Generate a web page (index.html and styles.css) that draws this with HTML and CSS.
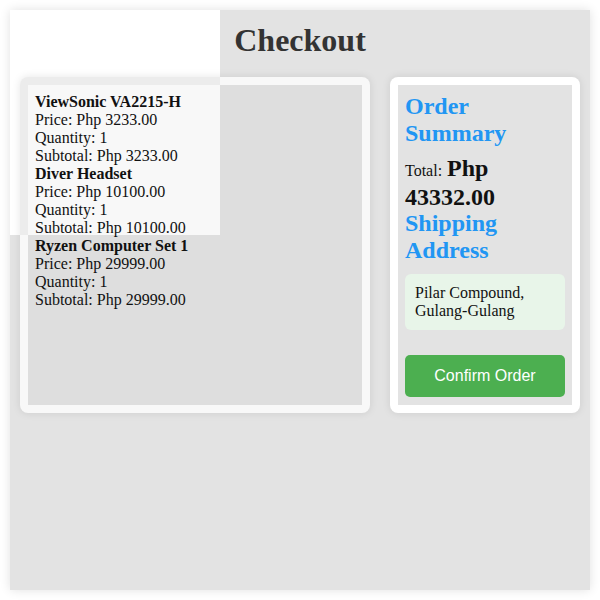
FILE: index.html
```html
<!DOCTYPE html>
<html>
<head>
<meta charset="utf-8">
<title>Checkout</title>
<link rel="stylesheet" href="styles.css">
</head>
<body>
<div class="container">
  <h1 class="title">Checkout</h1>
  <div class="layout">
    <div class="card card-items">
      <div class="items">
        <div class="item">
          <div class="item-name">ViewSonic VA2215-H</div>
          <div>Price: Php 3233.00</div>
          <div>Quantity: 1</div>
          <div>Subtotal: Php 3233.00</div>
        </div>
        <div class="item">
          <div class="item-name">Diver Headset</div>
          <div>Price: Php 10100.00</div>
          <div>Quantity: 1</div>
          <div>Subtotal: Php 10100.00</div>
        </div>
        <div class="item">
          <div class="item-name">Ryzen Computer Set 1</div>
          <div>Price: Php 29999.00</div>
          <div>Quantity: 1</div>
          <div>Subtotal: Php 29999.00</div>
        </div>
      </div>
    </div>
    <div class="card card-summary">
      <div class="summary">
        <h2 class="heading">Order Summary</h2>
        <p class="total">Total: <strong class="total-value">Php 43332.00</strong></p>
        <h2 class="heading">Shipping Address</h2>
        <div class="address">Pilar Compound, Gulang-Gulang</div>
        <button class="confirm">Confirm Order</button>
      </div>
    </div>
  </div>
</div>
</body>
</html>
```

FILE: styles.css
```css
html, body {
  margin: 0;
  padding: 0;
  background: #ffffff;
}

body {
  font-family: "Liberation Serif", "Times New Roman", serif;
  font-size: 16px;
  color: #111;
}

.container {
  position: relative;
  z-index: 0;
  margin: 10px;
  height: 580px;
  box-sizing: border-box;
  padding: 10px;
  background: #e3e3e3;
  box-shadow: 0 0 10px rgba(0, 0, 0, 0.12);
}

.container::before {
  content: "";
  position: absolute;
  left: 0;
  top: 0;
  width: 210px;
  height: 225px;
  background: #ffffff;
  z-index: -1;
}

.title {
  margin: 2px 0 18px;
  text-align: center;
  font-size: 32px;
  font-weight: bold;
  color: #333;
  line-height: 37px;
}

.layout {
  display: flex;
  gap: 20px;
  align-items: stretch;
}

.card {
  position: relative;
  z-index: 0;
  padding: 8px;
  border-radius: 8px;
  box-shadow: 0 0 8px rgba(0, 0, 0, 0.1);
  display: flex;
}

.card-items {
  flex: 1;
  background: #f8f8f8;
}

.card-items::before {
  content: "";
  position: absolute;
  left: 0;
  top: 0;
  width: 200px;
  height: 158px;
  background: #ececec;
  border-radius: 8px 0 0 0;
  z-index: -1;
}

.card-summary {
  width: 190px;
  box-sizing: border-box;
  background: #ffffff;
}

.items {
  position: relative;
  z-index: 0;
  flex: 1;
  background: #dedede;
  padding: 8px 7px;
  line-height: 18px;
}

.items::before {
  content: "";
  position: absolute;
  left: 0;
  top: 0;
  width: 192px;
  height: 150px;
  background: #f8f8f8;
  z-index: -1;
}

.item-name {
  font-weight: bold;
}

.summary {
  flex: 1;
  background: #e3e3e3;
  padding: 8px 7px 8px;
}

.heading {
  margin: 0;
  font-size: 24px;
  line-height: 27px;
  font-weight: bold;
  color: #2196f3;
}

.total {
  margin: 8px 0 -3px;
  font-size: 16px;
  line-height: 27px;
}

.total-value {
  font-size: 24px;
  line-height: 26px;
  margin-left: 1px;
}

.address {
  margin-top: 10px;
  padding: 10px;
  background: #e8f5e9;
  border-radius: 6px;
  line-height: 18px;
}

.confirm {
  display: block;
  width: 100%;
  margin-top: 25px;
  height: 42px;
  border: none;
  border-radius: 5px;
  background: #4caf50;
  color: #ffffff;
  font-family: "Liberation Sans", Arial, sans-serif;
  font-size: 16px;
  cursor: pointer;
}
```
